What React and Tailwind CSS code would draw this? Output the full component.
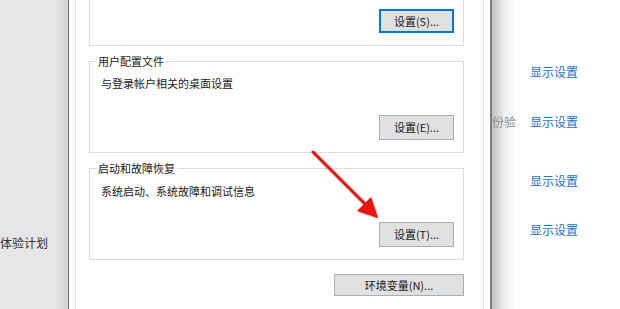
import React from 'react'

function WinButton({ children, focused, className = '' }) {
  return (
    <div
      className={`flex items-center justify-center bg-[#e1e1e1] text-[11px] text-[#1a1a1a] ${
        focused ? 'border-2 border-[#0078d7]' : 'border border-[#adadad]'
      } ${className}`}
    >
      {children}
    </div>
  )
}

function GroupBox({ title, desc, button, top }) {
  return (
    <div className={`relative mt-[15px] flex flex-col border border-[#dcdcdc] pb-[12px] ${top}`}>
      <span className="absolute -top-[8px] left-[6px] bg-white px-[2px] text-[11px] leading-[14px] text-[#1a1a1a]">
        {title}
      </span>
      <div className="pl-[11px] text-[11px] leading-[14px] text-[#1a1a1a]">{desc}</div>
      <div className="flex justify-end pr-[9px]">{button}</div>
    </div>
  )
}

export default function App() {
  return (
    <div className="relative flex h-[309px] w-[620px] overflow-hidden bg-white font-['Noto_Sans_CJK_SC','Microsoft_YaHei',sans-serif]">
      {/* Left settings page */}
      <div className="w-[68px] shrink-0 bg-[linear-gradient(to_right,#e6e6e6_82%,#d2d2d2)] pt-[235px] text-[12px] leading-[16px] text-[#333]">
        <div className="whitespace-nowrap">体验计划</div>
      </div>
      <div className="w-px shrink-0 bg-[#6e6e6e]" />

      {/* Dialog */}
      <div className="flex w-[421px] shrink-0 bg-white pl-[6px] pr-[6px]">
        <div className="flex w-[409px] flex-col border-x border-[#e3e3e3] pl-[13px] pr-[19px]">
          <div className="flex h-[46px] flex-col border-x border-b border-[#dcdcdc]">
            <div className="mt-[9px] flex justify-end pr-[9px]">
              <WinButton focused className="h-[24px] w-[75px]">设置(S)...</WinButton>
            </div>
          </div>

          <GroupBox
            title="用户配置文件"
            desc="与登录帐户相关的桌面设置"
            top="pt-[14px]"
            button={<WinButton className="mt-[25px] h-[25px] w-[75px]">设置(E)...</WinButton>}
          />

          <GroupBox
            title="启动和故障恢复"
            desc="系统启动、系统故障和调试信息"
            top="pt-[15px]"
            button={<WinButton className="mt-[24px] h-[25px] w-[75px]">设置(T)...</WinButton>}
          />

          <div className="mt-[14px] flex justify-end">
            <WinButton className="h-[22px] w-[130px]">环境变量(N)...</WinButton>
          </div>
        </div>
      </div>
      <div className="w-[2px] shrink-0 bg-[#7c7c7c]" />

      {/* Right settings page */}
      <div className="flex flex-1 flex-col bg-[linear-gradient(to_right,#c2c2c2,#eeeeee_12px,#ffffff_24px)] pt-[64px] text-[12px] leading-[16px]">
        <div className="pl-[38px] text-[#1a73d1]">显示设置</div>
        <div className="mt-[34px] flex">
          <span className="w-[38px] text-[#8c8c8c]">份验</span>
          <span className="text-[#1a73d1]">显示设置</span>
        </div>
        <div className="mt-[43px] pl-[38px] text-[#1a73d1]">显示设置</div>
        <div className="mt-[33px] pl-[38px] text-[#1a73d1]">显示设置</div>
      </div>

      {/* Red annotation arrow */}
      <svg className="pointer-events-none absolute left-0 top-0" width="620" height="309" viewBox="0 0 620 309">
        <g style={{ filter: 'drop-shadow(1px 1px 1px rgba(0,0,0,0.35))' }}>
          <line x1="313" y1="152" x2="366" y2="205" stroke="#e8140f" strokeWidth="3" strokeLinecap="round" />
          <polygon points="378,218 357,211 371,197" fill="#e8140f" />
        </g>
      </svg>
    </div>
  )
}
